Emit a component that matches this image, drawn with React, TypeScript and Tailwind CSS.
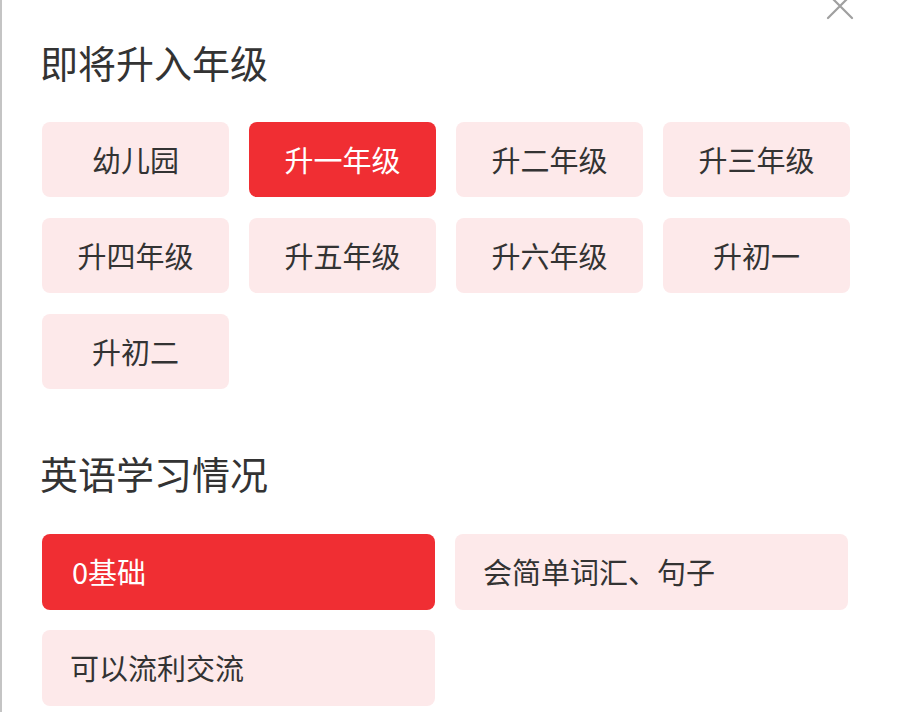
import React from "react";

const grades = ["幼儿园", "升一年级", "升二年级", "升三年级", "升四年级", "升五年级", "升六年级", "升初一", "升初二"];
const levels = ["0基础", "会简单词汇、句子", "可以流利交流"];

export default function App() {
  const font = { fontFamily: '"Noto Sans CJK SC", "Noto Sans", sans-serif' };
  return (
    <div className="relative w-[900px] h-[712px] overflow-hidden bg-white border-l-2 border-[#c4c4c4]" style={font}>
      <svg className="absolute left-[824px] top-[-8px]" width="28" height="28" viewBox="0 0 28 28">
        <path d="M2 2 L26 26 M26 2 L2 26" stroke="#a0a0a0" strokeWidth="2.2" strokeLinecap="round" />
      </svg>
      <div className="pl-[38px] pt-[40px]">
        <h2 className="text-[38px] leading-[44px] text-[#333] font-normal">即将升入年级</h2>
        <div className="mt-[38px] grid grid-cols-[repeat(4,187px)] gap-x-[20px] gap-y-[21px] pl-[2px]">
          {grades.map((g, i) => (
            <div
              key={g}
              className={
                i === 1
                  ? "h-[75px] rounded-[8px] bg-[#f02e33] text-white flex items-center justify-center text-[29px]"
                  : "h-[75px] rounded-[8px] bg-[#fde9ea] text-[#333] flex items-center justify-center text-[29px]"
              }
            >
              {g}
            </div>
          ))}
        </div>
        <h2 className="mt-[62px] text-[38px] leading-[44px] text-[#333] font-normal">英语学习情况</h2>
        <div className="mt-[39px] grid grid-cols-[repeat(2,393px)] gap-x-[20px] gap-y-[20px] pl-[2px]">
          {levels.map((l, i) => (
            <div
              key={l}
              className={
                i === 0
                  ? "h-[76px] rounded-[8px] bg-[#f02e33] text-white flex items-center pl-[30px] text-[29px]"
                  : "h-[76px] rounded-[8px] bg-[#fde9ea] text-[#333] flex items-center pl-[28px] text-[29px]"
              }
            >
              {l}
            </div>
          ))}
        </div>
      </div>
    </div>
  );
}
